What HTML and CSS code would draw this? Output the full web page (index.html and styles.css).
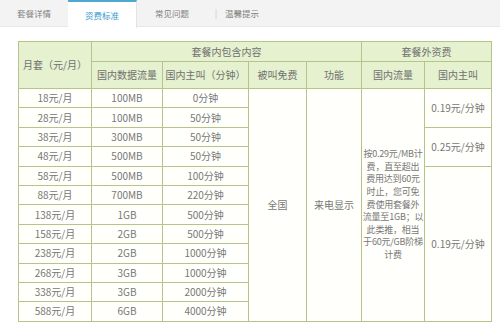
FILE: index.html
```html
<!DOCTYPE html>
<html lang="zh">
<head>
<meta charset="utf-8">
<link rel="stylesheet" href="styles.css">
</head>
<body>
<div class="tabs">
  <div class="tab">套餐详情</div>
  <div class="tab active">资费标准</div>
  <div class="tab">常见问题</div>
  <div class="sep">|</div>
  <div class="tab">温馨提示</div>
</div>
<div class="wrap">
<table class="fees">
  <colgroup>
    <col class="c1"><col class="c2"><col class="c3"><col class="c4"><col class="c5"><col class="c6"><col class="c7">
  </colgroup>
  <thead>
    <tr class="h1">
      <th rowspan="2" class="left">月套（元/月）</th>
      <th colspan="4">套餐内包含内容</th>
      <th colspan="2">套餐外资费</th>
    </tr>
    <tr class="h2">
      <th>国内数据流量</th>
      <th>国内主叫（分钟）</th>
      <th>被叫免费</th>
      <th>功能</th>
      <th>国内流量</th>
      <th>国内主叫</th>
    </tr>
  </thead>
  <tbody>
    <tr><td>18元/月</td><td>100MB</td><td>0分钟</td>
      <td rowspan="12">全国</td><td rowspan="12">来电显示</td>
      <td rowspan="12" class="note">按0.29元/MB计<br>费，直至超出<br>费用达到60元<br>时止，您可免<br>费使用套餐外<br>流量至1GB；以<br>此类推，相当<br>于60元/GB阶梯<br>计费</td>
      <td rowspan="2">0.19元/分钟</td></tr>
    <tr><td>28元/月</td><td>100MB</td><td>50分钟</td></tr>
    <tr><td>38元/月</td><td>300MB</td><td>50分钟</td><td rowspan="2">0.25元/分钟</td></tr>
    <tr><td>48元/月</td><td>500MB</td><td>50分钟</td></tr>
    <tr><td>58元/月</td><td>500MB</td><td>100分钟</td><td rowspan="8">0.19元/分钟</td></tr>
    <tr><td>88元/月</td><td>700MB</td><td>220分钟</td></tr>
    <tr><td>138元/月</td><td>1GB</td><td>500分钟</td></tr>
    <tr><td>158元/月</td><td>2GB</td><td>500分钟</td></tr>
    <tr><td>238元/月</td><td>2GB</td><td>1000分钟</td></tr>
    <tr><td>268元/月</td><td>3GB</td><td>1000分钟</td></tr>
    <tr><td>338元/月</td><td>3GB</td><td>2000分钟</td></tr>
    <tr><td>588元/月</td><td>6GB</td><td>4000分钟</td></tr>
  </tbody>
</table>
</div>
</body>
</html>
```
FILE: styles.css
```css
html, body {
  margin: 0;
  padding: 0;
  background: #fff;
  font-family: "Noto Sans CJK SC", "Noto Sans", sans-serif;
  color: #777;
}
.tabs {
  display: flex;
  align-items: center;
  height: 27px;
  background: #f3f3f3;
  border-bottom: 1px solid #e8e8e8;
  box-sizing: border-box;
  font-size: 8.5px;
  color: #808080;
}
.tab {
  height: 27px;
  display: flex;
  align-items: center;
  justify-content: center;
  box-sizing: border-box;
}
.tab:nth-child(1) { width: 68px; }
.tab.active {
  width: 69px;
  background: #fff;
  border-top: 2px solid #4fa8cf;
  border-right: 1px solid #e4e4e4;
  height: 28px;
  margin-top: 1px;
  color: #3b9ccc;
}
.tab:nth-child(3) { width: 70px; }
.sep { color: #c8c8c8; width: 18px; text-align: center; font-size: 9px; }
.tab:nth-child(5) { width: 50px; justify-content: flex-start; }

.wrap {
  padding: 14px 0 0 18px;
}
.fees {
  border-collapse: collapse;
  table-layout: fixed;
  width: 473px;
  font-size: 10px;
}
.c1 { width: 73px; }
.c2 { width: 71px; }
.c3 { width: 86px; }
.c4 { width: 58px; }
.c5 { width: 55px; }
.c6 { width: 63px; }
.c7 { width: 67px; }
.fees th, .fees td {
  border: 1px solid #b6c48c;
  padding: 0;
  text-align: center;
  vertical-align: middle;
  line-height: 12px;
}
.fees th {
  background: #e5f1cf;
  font-weight: normal;
  color: #707070;
}
.fees th.left { text-align: left; padding-left: 4px; }
.h1 th { height: 19px; }
.h2 th { height: 26px; }
.fees tbody tr { height: 19.4px; }
.fees td { background: #fffffb; }
.fees td.note {
  padding: 0;
  line-height: 12.6px;
  font-size: 9px;
  white-space: nowrap;
  letter-spacing: -0.2px;
}
```
